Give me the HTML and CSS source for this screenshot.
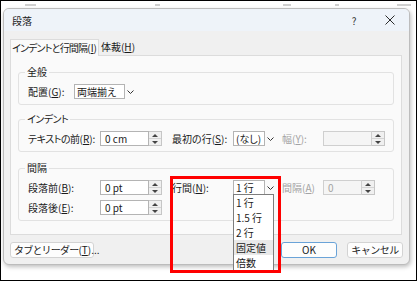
FILE: index.html
```html
<!DOCTYPE html>
<html lang="ja">
<head>
  <meta charset="UTF-8">
  <title>段落</title>
  <link rel="stylesheet" href="styles.css">
</head>
<body>
  <div class="frame">

    <!-- document behind the dialog, only the feet of a few glyphs show -->
    <div class="backdrop">
      <i class="frag f1"></i>
      <i class="frag f2"></i>
      <i class="frag f3"></i>
      <i class="frag f4"></i>
      <i class="frag f5"></i>
    </div>

    <div class="dialog">
      <div class="titlebar">
        <span class="title">段落</span>
        <span class="help">?</span>
        <span class="close">
          <svg width="10" height="10" viewBox="0 0 10 10"><path d="M0.5 0.5 L9.5 9.5 M9.5 0.5 L0.5 9.5" stroke="#2b2b2b" stroke-width="1" fill="none"/></svg>
        </span>
      </div>

      <div class="body">
        <div class="tabs">
          <div class="tab active"><span class="narrow">インデントと行間隔</span>(<u>I</u>)</div>
          <div class="tab">体裁(<u>H</u>)</div>
        </div>

        <div class="panel">
          <fieldset class="group">
            <legend>全般</legend>
            <div class="row">
              <span class="lbl w46">配置(<u>G</u>):</span>
              <div class="combo">
                <span class="combo-text wide">両端揃え</span>
                <span class="chev"><svg width="7" height="4" viewBox="0 0 7 4"><polyline points="0.5,0.5 3.5,3.5 6.5,0.5" stroke="#333" fill="none"/></svg></span>
              </div>
            </div>
          </fieldset>

          <fieldset class="group">
            <legend class="kana">インデント</legend>
            <div class="row">
              <span class="lbl w72"><span class="kana">テキストの前</span>(<u>R</u>):</span>
              <div class="field">
                <span class="input">0 cm</span>
                <span class="spin"><i class="up"></i><i class="down"></i></span>
              </div>
              <span class="lbl lbl2">最初の行(<u>S</u>):</span>
              <div class="combo">
                <span class="combo-text">(なし)</span>
                <span class="chev"><svg width="7" height="4" viewBox="0 0 7 4"><polyline points="0.5,0.5 3.5,3.5 6.5,0.5" stroke="#333" fill="none"/></svg></span>
              </div>
              <span class="lbl lbl3 off">幅(<u>Y</u>):</span>
              <div class="field">
                <span class="input disabled w49"></span>
                <span class="spin"><i class="up"></i><i class="down"></i></span>
              </div>
            </div>
          </fieldset>

          <fieldset class="group spacing">
            <legend>間隔</legend>
            <div class="row">
              <span class="lbl w72">段落前(<u>B</u>):</span>
              <div class="field">
                <span class="input">0 pt</span>
                <span class="spin"><i class="up"></i><i class="down"></i></span>
              </div>
              <span class="lbl lbl2">行間(<u>N</u>):</span>
              <div class="combo">
                <span class="combo-text">1 行</span>
                <span class="chev"><svg width="7" height="4" viewBox="0 0 7 4"><polyline points="0.5,0.5 3.5,3.5 6.5,0.5" stroke="#333" fill="none"/></svg></span>
              </div>
              <span class="lbl lbl3 off">間隔(<u>A</u>)</span>
              <div class="field">
                <span class="input disabled w39">0</span>
                <span class="spin"><i class="up"></i><i class="down"></i></span>
              </div>
            </div>
            <div class="row">
              <span class="lbl w72">段落後(<u>E</u>):</span>
              <div class="field">
                <span class="input">0 pt</span>
                <span class="spin"><i class="up"></i><i class="down"></i></span>
              </div>
            </div>
          </fieldset>
        </div>

        <div class="footer">
          <button class="btn btn-tabs"><span class="narrow">タブとリーダー</span>(<u>T</u>)...</button>
          <button class="btn btn-ok">OK</button>
          <button class="btn btn-cancel kana">キャンセル</button>
        </div>
      </div>
    </div>

    <!-- open drop-down of 行間 -->
    <ul class="listbox">
      <li>1 行</li>
      <li>1.5 行</li>
      <li>2 行</li>
      <li class="hover">固定値</li>
      <li>倍数</li>
    </ul>

    <!-- red highlight box -->
    <div class="callout"></div>
  </div>
</body>
</html>
```

FILE: styles.css
```css
* {
  box-sizing: border-box;
}

body {
  margin: 0;
  font-family: "Noto Sans CJK JP", "Noto Sans", sans-serif;
  font-size: 10px;
  font-feature-settings: "palt";
  color: #1b1b1b;
  background: #fff;
}

.kana {
  letter-spacing: -0.5px;
}

.narrow {
  letter-spacing: -0.8px;
}

.frame {
  position: relative;
  width: 417px;
  height: 281px;
  border: 1px solid #000;
  background: #fff;
  overflow: hidden;
}

.backdrop {
  display: flex;
  align-items: flex-start;
  height: 6px;
  padding-top: 3px;
}

.frag {
  height: 2px;
  background: #cfcfcf;
}

.f1 { width: 11px; margin-left: 24px; }
.f2 { width: 5px; margin-left: 119px; }
.f3 { width: 8px; margin-left: 123px; }
.f4 { width: 4px; margin-left: 44px; }
.f5 { width: 14px; margin-left: 58px; }

.dialog {
  display: flex;
  flex-direction: column;
  width: 407px;
  height: 257px;
  margin: 1px 0 0 2px;
  border: 1px solid #bcbcbc;
  border-radius: 6px;
  background: #f0f0f0;
  box-shadow: 1px 2px 4px rgba(0, 0, 0, 0.25);
  overflow: hidden;
}

.titlebar {
  display: flex;
  align-items: center;
  height: 22px;
  padding: 0 14px 0 8px;
  background: #eef3f9;
}

.help {
  margin-left: auto;
  width: 12px;
  text-align: center;
  color: #333;
}

.close {
  display: flex;
  margin-left: 25px;
}

.body {
  flex: 1;
  padding: 8px 7px 0 6px;
}

.tabs {
  display: flex;
  height: 16px;
}

.tab {
  padding: 0 4px 0 2px;
  line-height: 16px;
  white-space: nowrap;
}

.tab.active {
  position: relative;
  z-index: 1;
  margin-bottom: -1px;
  padding: 0 1px 0 1px;
  background: #fafafa;
  border: 1px solid #dcdcdc;
  border-bottom: none;
}

.panel {
  height: 180px;
  padding: 0 7px;
  background: #fafafa;
  border: 1px solid #dcdcdc;
}

.group {
  margin: 8px 0 0;
  padding: 0 0 5px 9px;
  border: 1px solid #e2e2e2;
  border-radius: 3px;
  min-width: 0;
}

.group:first-child {
  margin-top: 10px;
}

.group.spacing {
  margin-top: 10px;
}

.group legend {
  margin-left: -3px;
  padding: 0 2px;
  line-height: 12px;
}

.row {
  display: flex;
  align-items: center;
  height: 15px;
  margin-top: 6px;
}

.row + .row {
  margin-top: 5px;
}

.lbl {
  white-space: nowrap;
  line-height: 15px;
}

.w46 { width: 46px; }
.w72 { width: 72px; }

.lbl2 {
  width: 61px;
  margin-left: 10px;
}

.lbl3 {
  width: 41px;
  margin-left: 6px;
}

.off {
  color: #a3a3a3;
}

.field {
  display: flex;
  height: 15px;
}

.input {
  width: 49px;
  height: 15px;
  padding-left: 4px;
  line-height: 13px;
  background: #fff;
  border: 1px solid #b4b4b4;
}

.input.disabled {
  background: #f5f5f5;
  border-color: #cfcfcf;
  color: #a3a3a3;
}

.w49 { width: 49px; }
.w39 { width: 39px; }

.spin {
  display: flex;
  flex-direction: column;
  width: 13px;
  height: 15px;
  background: #f0f0f0;
  border: 1px solid #c6c6c6;
  border-left: none;
}

.spin i {
  display: flex;
  flex: 1;
  align-items: center;
  justify-content: center;
}

.spin i + i {
  border-top: 1px solid #d4d4d4;
}

.spin .up::before,
.spin .down::before {
  content: "";
  border-left: 3px solid transparent;
  border-right: 3px solid transparent;
}

.spin .up::before {
  border-bottom: 3px solid #444;
}

.spin .down::before {
  border-top: 3px solid #444;
}

.combo {
  display: flex;
  align-items: center;
  height: 15px;
}

.combo-text {
  width: 32px;
  height: 15px;
  padding-left: 2px;
  line-height: 13px;
  background: #fff;
  border: 1px solid #b4b4b4;
  white-space: nowrap;
}

.combo-text.wide {
  width: 51px;
}

.chev {
  display: flex;
  justify-content: center;
  width: 11px;
}

.footer {
  display: flex;
  align-items: center;
  margin-top: 7px;
}

.btn {
  height: 16px;
  padding: 0;
  font-family: inherit;
  font-size: 10px;
  line-height: 14px;
  color: #1b1b1b;
  background: #fdfdfd;
  border: 1px solid #d3d3d3;
  border-radius: 3px;
  white-space: nowrap;
}

.btn-tabs {
  width: 84px;
  padding: 0 3px;
}

.btn-ok {
  width: 56px;
  margin-left: auto;
  border-color: #6aa3d8;
}

.btn-cancel {
  width: 56px;
  margin-left: 10px;
  margin-right: -1px;
}

.listbox {
  position: absolute;
  left: 232px;
  top: 193px;
  width: 41px;
  margin: 0;
  padding: 0;
  list-style: none;
  background: #fff;
  border: 1px solid #7d7d7d;
}

.listbox li {
  height: 15px;
  padding-left: 2px;
  line-height: 15px;
  white-space: nowrap;
}

.listbox li.hover {
  background: #e9e9e9;
}

.callout {
  position: absolute;
  left: 169px;
  top: 175px;
  width: 111px;
  height: 97px;
  border: 3px solid #ff0000;
}
```
